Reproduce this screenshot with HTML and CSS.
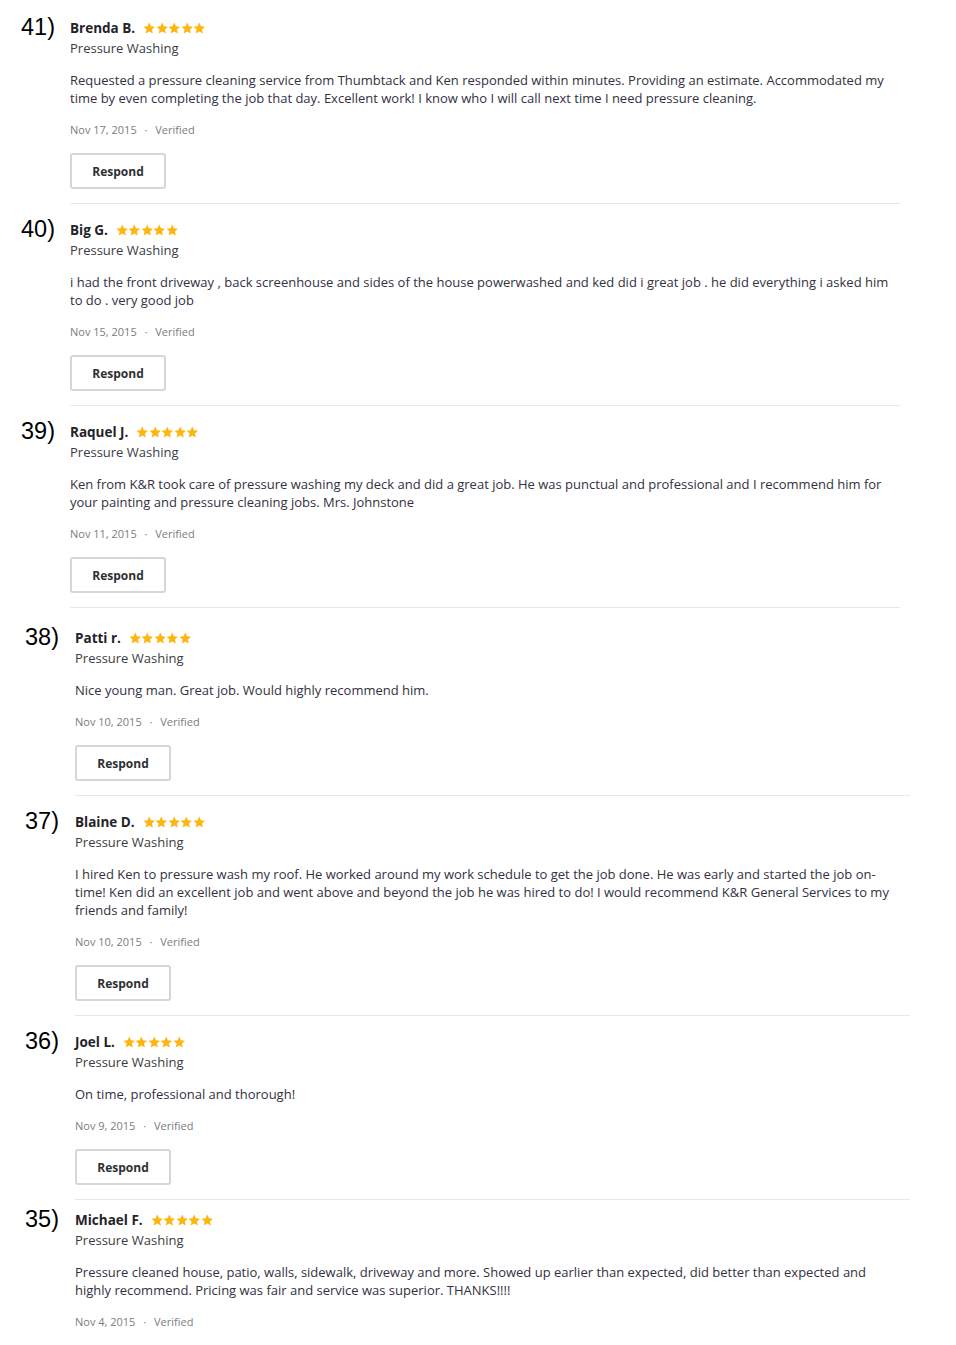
FILE: index.html
```html
<!DOCTYPE html>
<html lang="en">
<head>
    <meta charset="UTF-8">
    <meta name="viewport" content="width=device-width, initial-scale=1.0">
    <title>Reviews - Pressure Washing</title>
    <link rel="stylesheet" href="styles.css">
</head>
<body>
    <!-- Star shape, reused by every rating -->
    <svg class="sprite" xmlns="http://www.w3.org/2000/svg">
        <symbol id="star" viewBox="0 0 24 24">
            <path d="M12 1l3.2 7.3 7.9.7-6 5.3 1.8 7.7L12 18l-6.9 4 1.8-7.7-6-5.3 7.9-.7z"/>
        </symbol>
    </svg>

    <main class="reviews">
        <article class="review">
            <div class="review-num">41)</div>
            <div class="review-content">
                <div class="review-head">
                    <span class="review-name">Brenda B.</span>
                    <span class="stars"><svg><use href="#star"/></svg><svg><use href="#star"/></svg><svg><use href="#star"/></svg><svg><use href="#star"/></svg><svg><use href="#star"/></svg></span>
                </div>
                <div class="review-cat">Pressure Washing</div>
                <p class="review-text">Requested a pressure cleaning service from Thumbtack and Ken responded within minutes. Providing an estimate. Accommodated my time by even completing the job that day. Excellent work! I know who I will call next time I need pressure cleaning.</p>
                <div class="review-meta">Nov 17, 2015 <span class="dot">·</span> Verified</div>
                <button class="respond">Respond</button>
            </div>
        </article>

        <article class="review">
            <div class="review-num">40)</div>
            <div class="review-content">
                <div class="review-head">
                    <span class="review-name">Big G.</span>
                    <span class="stars"><svg><use href="#star"/></svg><svg><use href="#star"/></svg><svg><use href="#star"/></svg><svg><use href="#star"/></svg><svg><use href="#star"/></svg></span>
                </div>
                <div class="review-cat">Pressure Washing</div>
                <p class="review-text">i had the front driveway , back screenhouse and sides of the house powerwashed and ked did i great job . he did everything i asked him to do . very good job</p>
                <div class="review-meta">Nov 15, 2015 <span class="dot">·</span> Verified</div>
                <button class="respond">Respond</button>
            </div>
        </article>

        <article class="review">
            <div class="review-num">39)</div>
            <div class="review-content">
                <div class="review-head">
                    <span class="review-name">Raquel J.</span>
                    <span class="stars"><svg><use href="#star"/></svg><svg><use href="#star"/></svg><svg><use href="#star"/></svg><svg><use href="#star"/></svg><svg><use href="#star"/></svg></span>
                </div>
                <div class="review-cat">Pressure Washing</div>
                <p class="review-text">Ken from K&amp;R took care of pressure washing my deck and did a great job. He was punctual and professional and I recommend him for your painting and pressure cleaning jobs. Mrs. Johnstone</p>
                <div class="review-meta">Nov 11, 2015 <span class="dot">·</span> Verified</div>
                <button class="respond">Respond</button>
            </div>
        </article>

        <article class="review review--wide review--gap">
            <div class="review-num">38)</div>
            <div class="review-content">
                <div class="review-head">
                    <span class="review-name">Patti r.</span>
                    <span class="stars"><svg><use href="#star"/></svg><svg><use href="#star"/></svg><svg><use href="#star"/></svg><svg><use href="#star"/></svg><svg><use href="#star"/></svg></span>
                </div>
                <div class="review-cat">Pressure Washing</div>
                <p class="review-text">Nice young man. Great job. Would highly recommend him.</p>
                <div class="review-meta">Nov 10, 2015 <span class="dot">·</span> Verified</div>
                <button class="respond">Respond</button>
            </div>
        </article>

        <article class="review review--wide">
            <div class="review-num">37)</div>
            <div class="review-content">
                <div class="review-head">
                    <span class="review-name">Blaine D.</span>
                    <span class="stars"><svg><use href="#star"/></svg><svg><use href="#star"/></svg><svg><use href="#star"/></svg><svg><use href="#star"/></svg><svg><use href="#star"/></svg></span>
                </div>
                <div class="review-cat">Pressure Washing</div>
                <p class="review-text">I hired Ken to pressure wash my roof. He worked around my work schedule to get the job done. He was early and started the job on-time! Ken did an excellent job and went above and beyond the job he was hired to do! I would recommend K&amp;R General Services to my friends and family!</p>
                <div class="review-meta">Nov 10, 2015 <span class="dot">·</span> Verified</div>
                <button class="respond">Respond</button>
            </div>
        </article>

        <article class="review review--wide">
            <div class="review-num">36)</div>
            <div class="review-content">
                <div class="review-head">
                    <span class="review-name">Joel L.</span>
                    <span class="stars"><svg><use href="#star"/></svg><svg><use href="#star"/></svg><svg><use href="#star"/></svg><svg><use href="#star"/></svg><svg><use href="#star"/></svg></span>
                </div>
                <div class="review-cat">Pressure Washing</div>
                <p class="review-text">On time, professional and thorough!</p>
                <div class="review-meta">Nov 9, 2015 <span class="dot">·</span> Verified</div>
                <button class="respond">Respond</button>
            </div>
        </article>

        <article class="review review--wide review--last">
            <div class="review-num">35)</div>
            <div class="review-content">
                <div class="review-head">
                    <span class="review-name">Michael F.</span>
                    <span class="stars"><svg><use href="#star"/></svg><svg><use href="#star"/></svg><svg><use href="#star"/></svg><svg><use href="#star"/></svg><svg><use href="#star"/></svg></span>
                </div>
                <div class="review-cat">Pressure Washing</div>
                <p class="review-text">Pressure cleaned house, patio, walls, sidewalk, driveway and more. Showed up earlier than expected, did better than expected and highly recommend. Pricing was fair and service was superior. THANKS!!!!</p>
                <div class="review-meta">Nov 4, 2015 <span class="dot">·</span> Verified</div>
            </div>
        </article>
    </main>
</body>
</html>
```

FILE: styles.css
```css
/* Page */
body {
    margin: 0;
    padding: 0;
    background-color: #fff;
    font-family: 'Open Sans', 'Liberation Sans', sans-serif;
    color: #2f3033;
}

.sprite {
    display: none;
}

.reviews {
    padding-top: 18px;
}

/* One review: number on the left, card content on the right */
.review {
    display: grid;
    grid-template-columns: 70px 830px;
    margin-bottom: 16px;
}

.review--wide {
    grid-template-columns: 75px 835px;
}

/* the screenshots were stitched, spacing is not quite even */
.review--gap {
    margin-top: 20px;
}

.review--last {
    margin-top: -6px;
}

.review-num {
    font-family: 'Liberation Sans', Arial, sans-serif;
    font-size: 23.5px;
    line-height: 19px;
    color: #000;
    padding-left: 21px;
}

.review--wide .review-num {
    padding-left: 25px;
}

.review-content {
    border-bottom: 1px solid #e8e8e8;
    padding-bottom: 14px;
}

.review--last .review-content {
    border-bottom: none;
}

.review-head {
    display: flex;
    align-items: center;
    gap: 8px;
    height: 20px;
}

.review-name {
    font-weight: 700;
    font-size: 13.5px;
    color: #232328;
}

.stars {
    display: flex;
    color: #fdb60f;
}

.stars svg {
    width: 12.5px;
    height: 12.5px;
    fill: currentColor;
}

.review-cat {
    font-size: 13px;
    line-height: 20px;
    color: #3c3c44;
}

.review-text {
    margin: 13px 0 0;
    font-size: 13px;
    line-height: 18px;
    color: #33313f;
    width: 826px;
}

.review-meta {
    margin-top: 14px;
    font-size: 11px;
    line-height: 18px;
    color: #7c7c80;
}

.review-meta .dot {
    margin: 0 5px;
}

.respond {
    display: block;
    margin-top: 14px;
    width: 96px;
    height: 36px;
    background-color: #fff;
    border: 2px solid #d6d6d8;
    border-radius: 3px;
    font-family: 'Open Sans', 'Liberation Sans', sans-serif;
    font-weight: 700;
    font-size: 12px;
    color: #2f3033;
    cursor: pointer;
}
```
